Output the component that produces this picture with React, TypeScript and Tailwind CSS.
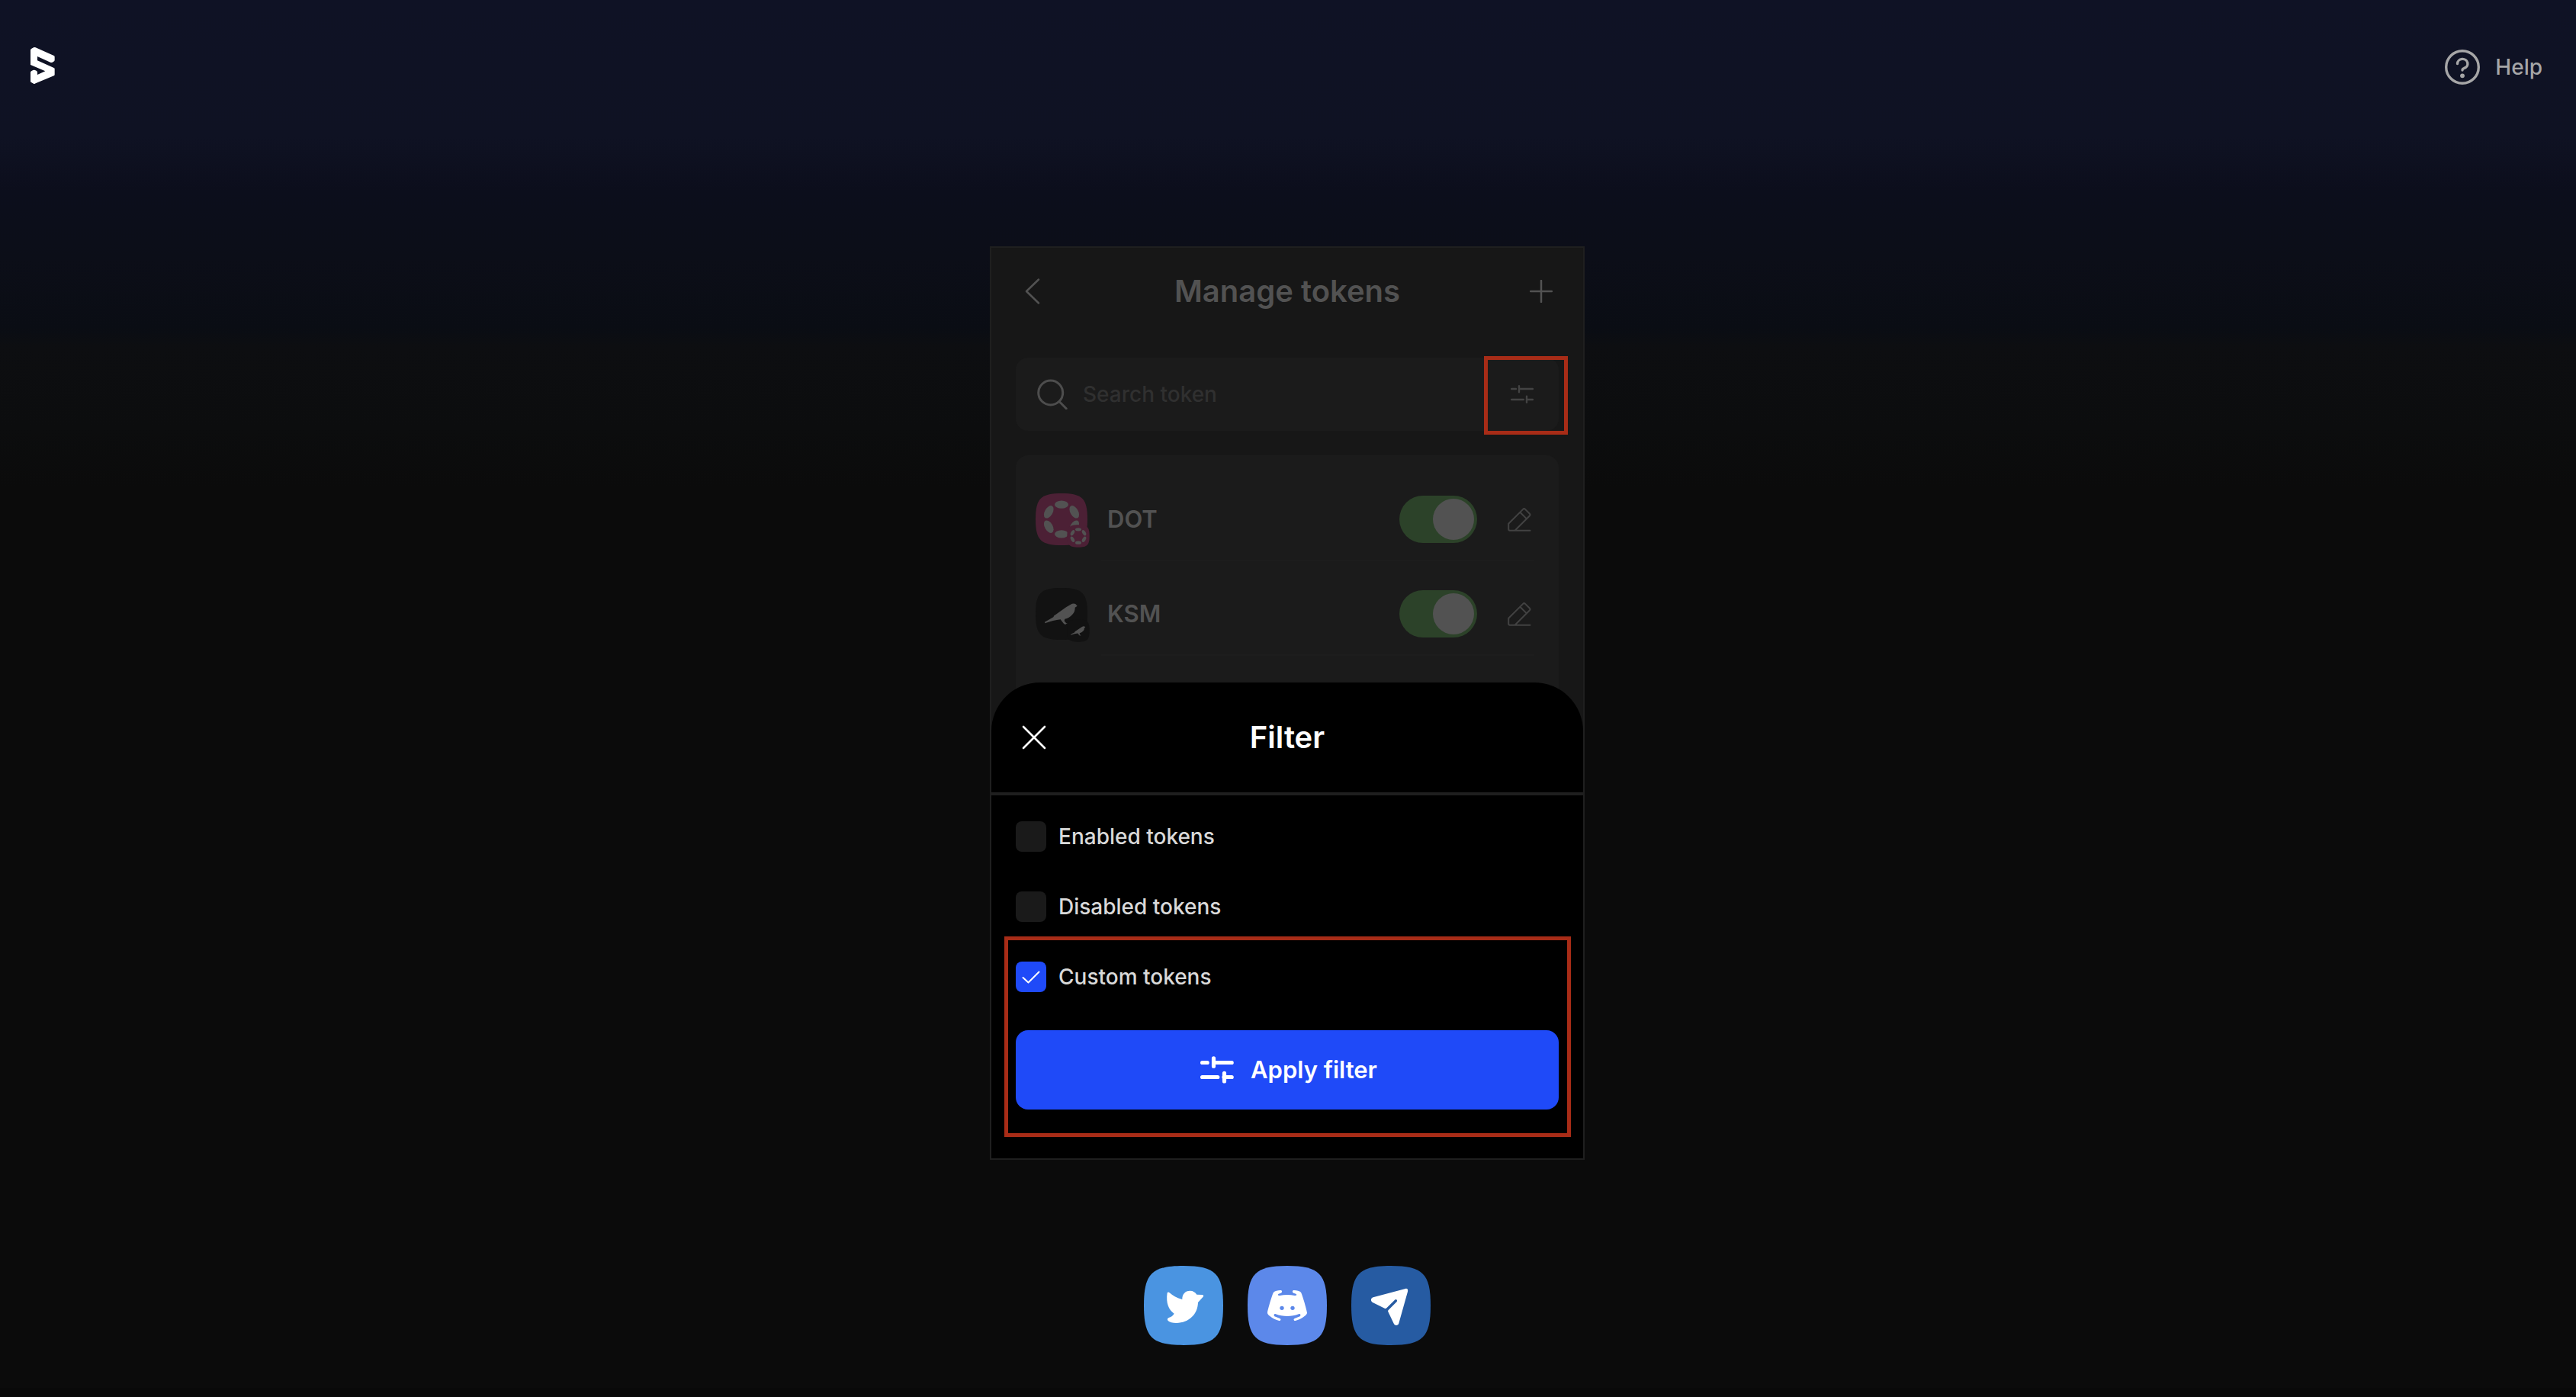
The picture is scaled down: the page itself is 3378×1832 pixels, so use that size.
import { useState } from "react";

const SQUIRCLE = "M50 0C10 0 0 10 0 50S10 100 50 100 100 90 100 50 90 0 50 0Z";

function Logo() {
  return (
    <svg viewBox="0 0 96 144" className="h-12 w-8" fill="#fff" aria-hidden="true">
      <path d="M0 11Q0 8 3 6L12 1Q16 -1 20 1L92 33Q95 34 95 38V50Q95 54 91 56L86 59Q82 61 78 59L27 36V52L92 81Q95 82 95 85V107Q95 110 92 112L20 142Q16 145 12 143L3 138Q0 137 0 134V99Q0 96 3 94L10 90Q14 88 18 90L24 93Q27 95 27 98V108L58 94L0 69Z" />
    </svg>
  );
}

function HelpIcon() {
  return (
    <svg viewBox="0 0 46 46" className="size-[46px]" fill="none" stroke="#a6a6a7" aria-hidden="true">
      <circle cx="23" cy="23" r="21.3" strokeWidth="3.4" />
      <path d="M16.5 18.5a6.7 6.2 0 1 1 8.6 6Q23 25.2 23 27" strokeWidth="3.4" strokeLinecap="round" />
      <circle cx="23" cy="34.3" r="2.9" fill="#a6a6a7" stroke="none" />
    </svg>
  );
}

function SlidersThin() {
  return (
    <svg viewBox="0 0 30 24" className="h-6 w-[30px]" fill="none" stroke="#434343" strokeWidth="2.4" strokeLinecap="round" aria-hidden="true">
      <path d="M1.2 5H7M12 5h17M1.2 19h15.6M22 19h7" />
      <path d="M11 1.2v8M21 14.8v8" />
    </svg>
  );
}

function SlidersBold() {
  return (
    <svg viewBox="0 0 44 36" className="h-9 w-11" fill="none" stroke="#fff" strokeWidth="5.2" strokeLinecap="round" aria-hidden="true">
      <path d="M2.6 8.5h6.6M18 8.5h23.2M2.6 27.5h20.2M31 27.5h10.2" />
      <path d="M17.5 2.8v10.4M31.5 22.4v10.6" />
    </svg>
  );
}

function Pencil() {
  return (
    <svg viewBox="0 0 31 31" className="size-[31px]" fill="none" stroke="#424242" strokeWidth="2" strokeLinecap="round" strokeLinejoin="round" aria-hidden="true">
      <path d="M29.5 29.7H3Q1.2 29.7 1.2 28V20.8L20.4 1.6Q21.6 .6 22.8 1.6L29 7.8Q30 9 29 10.2L10 29.2M16.3 5.8l8.6 8.6" />
    </svg>
  );
}

const PETALS = [0, 60, 120, 180, 240, 300];

function DotIcon() {
  return (
    <svg viewBox="0 0 216 216" className="size-[72px]" aria-hidden="true">
      <path d={SQUIRCLE} transform="scale(2.04)" fill="#4c2035" />
      <g transform="translate(102 102)" fill="#525252">
        {PETALS.map((a) => (
          <ellipse key={a} cx="0" cy="-58" rx="27" ry="15.5" transform={`rotate(${a})`} />
        ))}
      </g>
      <path d={SQUIRCLE} transform="translate(124 124) scale(.88)" fill="#4c2035" />
      <g transform="translate(168 168)" fill="#525252">
        {PETALS.map((a) => (
          <ellipse key={a} cx="0" cy="-26" rx="12" ry="6.5" transform={`rotate(${a})`} />
        ))}
      </g>
    </svg>
  );
}

const BIRD =
  "M36 134L70 115Q71 108 80 104L120 76L138 65Q148 59 157 63L164 71L155 77Q156 92 145 104Q132 119 115 122L113 130Q118 138 126 141L118 141L121 145L112 142L104 132L98 124Q70 127 37 139Z";

function KsmIcon() {
  return (
    <svg viewBox="0 0 216 216" className="size-[72px]" aria-hidden="true">
      <path d={SQUIRCLE} transform="scale(2.04)" fill="#121212" />
      <path d={BIRD} fill="#525252" />
      <path d={SQUIRCLE} transform="translate(124 124) scale(.88)" fill="#121212" />
      <path d={BIRD} transform="translate(122 123) scale(.45)" fill="#525252" />
    </svg>
  );
}

function TokenRow({ symbol, icon }: { symbol: string; icon: React.ReactNode }) {
  const [on, setOn] = useState(true);
  return (
    <li className="mb-4">
      <div className="flex h-[106px] items-center pr-9 pl-[26px]">
        <div className="mt-1 mr-[22px] shrink-0">{icon}</div>
        <span className="flex-1 text-[31px] font-semibold text-[#525252]">{symbol}</span>
        <button
          type="button"
          role="switch"
          aria-checked={on}
          aria-label={`Show ${symbol}`}
          onClick={() => setOn(!on)}
          className={`flex h-[62px] w-[102px] rounded-full p-1 ${on ? "justify-end bg-[#2c4229]" : "justify-start bg-[#2a2a2a]"}`}
        >
          <span className="size-[54px] rounded-full bg-[#525252]" />
        </button>
        <button type="button" aria-label={`Edit ${symbol}`} className="ml-10">
          <Pencil />
        </button>
      </div>
      <div className="mr-8 ml-28 h-0.5 bg-[#1d1d1d]" />
    </li>
  );
}

function FilterOption({ label, initial = false }: { label: string; initial?: boolean }) {
  const [checked, setChecked] = useState(initial);
  return (
    <label className="flex h-10 items-center gap-4 text-[28px] font-medium text-[#d9d9d9]">
      <span className="grid size-10 shrink-0">
        <input
          type="checkbox"
          checked={checked}
          onChange={(e) => setChecked(e.target.checked)}
          className="col-start-1 row-start-1 size-10 appearance-none rounded-lg bg-[#1a1a1a] checked:bg-[#1f4af8]"
        />
        {checked && (
          <svg viewBox="0 0 40 40" className="pointer-events-none col-start-1 row-start-1 size-10" fill="none" stroke="#fff" strokeWidth="2" strokeLinecap="round" strokeLinejoin="round" aria-hidden="true">
            <path d="M9.5 21l7 6.5L30.5 13.5" />
          </svg>
        )}
      </span>
      {label}
    </label>
  );
}

function Social({ label, fill, children }: { label: string; fill: string; children: React.ReactNode }) {
  return (
    <a href="#" aria-label={label}>
      <svg viewBox="0 0 312 312" className="size-[104px]" aria-hidden="true">
        <path d={SQUIRCLE} transform="scale(3.12)" fill={fill} />
        {children}
      </svg>
    </a>
  );
}

const DISCORD_HALF =
  "M157 114C146 114 136 115 127 117C119 118 117 112 122 110L131 107C138 104 136 95 129 96C118 97 108 99 102 104C97 112 80 170 78 184C78 190 82 194 88 198C98 207 112 213 124 216C130 217 133 210 127 207L106 199C101 194 105 187 111 190C125 196 140 198 157 198Z";

export default function App() {
  return (
    <div className="flex min-h-screen flex-col bg-[#0b0b0b] bg-[linear-gradient(to_bottom,#0f1225_0px,#0f1223_180px,#0c0e1c_250px,#0c0e18_340px,#0a0d14_430px,#0d0e11_455px,#0c0d0e_560px,#0b0b0b_640px)] font-[Inter,sans-serif]">
      <header className="flex items-center justify-between py-[62px] pr-11 pl-10">
        <a href="#" aria-label="Home">
          <Logo />
        </a>
        <a href="#" className="-my-4 flex items-center gap-5 pt-1 text-[28px] font-medium text-[#a6a6a7]">
          <HelpIcon />
          Help
        </a>
      </header>

      <main className="mt-[151px] flex flex-col items-center pr-0.5">
        <section className="relative flex min-h-[1198px] w-full max-w-[780px] flex-col overflow-hidden border-2 border-[#1f1f1f] bg-[#171717] px-8">
          <div className="grid h-[114px] grid-cols-[1fr_auto_1fr] items-center px-2">
            <button type="button" aria-label="Back" className="justify-self-start pl-1">
              <svg viewBox="0 0 20 34" className="h-[34px] w-5" fill="none" stroke="#525252" strokeWidth="2.5" strokeLinecap="round" strokeLinejoin="round" aria-hidden="true">
                <path d="M18 1.5L2 17l16 15.5" />
              </svg>
            </button>
            <h1 className="text-[40px] font-semibold text-[#525252]">Manage tokens</h1>
            <button type="button" aria-label="Add token" className="justify-self-end">
              <svg viewBox="0 0 30 30" className="size-[30px]" fill="none" stroke="#525252" strokeWidth="2.5" strokeLinecap="round" aria-hidden="true">
                <path d="M15 1v28M1 15h28" />
              </svg>
            </button>
          </div>

          <div className="mt-[30px] flex h-24 items-center rounded-2xl bg-[#1b1b1b] pl-7">
            <svg viewBox="0 0 40 40" className="size-10 shrink-0" fill="none" stroke="#4d4d4d" strokeWidth="3" strokeLinecap="round" aria-hidden="true">
              <circle cx="17.7" cy="18" r="16" />
              <path d="M29 29.5l9.2 9.2" />
            </svg>
            <input
              type="text"
              aria-label="Search token"
              placeholder="Search token"
              className="ml-5 min-w-0 flex-1 bg-transparent text-[28px] font-medium text-[#525252] outline-none placeholder:text-[#303030]"
            />
            <button type="button" aria-label="Filter tokens" className="relative flex size-24 items-center justify-center">
              <SlidersThin />
              <span className="absolute -top-0.5 -right-3 -bottom-[5px] -left-0.5 border-5 border-[#a82c17]" />
            </button>
          </div>

          <ul className="mt-8 flex-1 rounded-t-2xl bg-[#1b1b1b] pt-[31px]">
            <TokenRow symbol="DOT" icon={<DotIcon />} />
            <TokenRow symbol="KSM" icon={<KsmIcon />} />
          </ul>

          <div role="dialog" aria-label="Filter" className="absolute inset-x-0 bottom-0 rounded-t-[64px] bg-black">
            <div className="grid h-[148px] grid-cols-[1fr_auto_1fr] items-center border-b-4 border-[#1f1f1f] px-10">
              <button type="button" aria-label="Close" className="justify-self-start">
                <svg viewBox="0 0 32 32" className="size-8" fill="none" stroke="#fff" strokeWidth="2.6" strokeLinecap="round" aria-hidden="true">
                  <path d="M2 2l28 28M30 2L2 30" />
                </svg>
              </button>
              <h2 className="text-[40px] font-semibold text-white">Filter</h2>
            </div>
            <div className="flex flex-col gap-[52px] px-8 pt-[34px] pb-16">
              <FilterOption label="Enabled tokens" />
              <FilterOption label="Disabled tokens" />
              <div className="relative flex flex-col gap-[50px]">
                <FilterOption label="Custom tokens" initial />
                <button type="button" className="flex h-[104px] items-center justify-center gap-[22px] rounded-2xl bg-[#1f4af8] pl-1 text-[31px] font-semibold text-white">
                  <SlidersBold />
                  Apply filter
                </button>
                <span className="pointer-events-none absolute -top-[33px] -right-4 -bottom-9 -left-[15px] border-5 border-[#a82c17]" />
              </div>
            </div>
          </div>
        </section>

        <nav aria-label="Social" className="mt-[139px] flex gap-8">
          <Social label="Twitter" fill="#4a94e1">
            <path
              fill="#fff"
              d="M92 106C95 103 98 103 101 106C114 118 131 128 151 132C150 112 163 98 181 98C194 98 203 104 208 113L230 114C236 115 236 119 232 123L213 144C212 190 178 224 128 225C113 225 101 222 95 216C91 211 92 207 98 204C106 201 114 197 119 188C98 173 86 148 92 106Z"
            />
          </Social>
          <Social label="Discord" fill="#5c88ea">
            <path d={DISCORD_HALF} fill="#fff" />
            <path d={DISCORD_HALF} transform="translate(312 0) scale(-1 1)" fill="#fff" />
            <circle cx="135" cy="166" r="8" fill="#5c88ea" />
            <circle cx="177" cy="166" r="8" fill="#5c88ea" />
          </Social>
          <Social label="Telegram" fill="#265ba2">
            <path
              fill="#fff"
              d="M213 90C220 88 224 93 222 101L187 226C185 235 173 237 168 229L145 181Q143 177 146 174L179 141C183 135 176 129 171 134L139 166Q136 169 131 167L84 144C75 139 76 127 86 124Z"
            />
          </Social>
        </nav>
      </main>

      <footer className="mt-auto h-3 bg-[#090909]" />
    </div>
  );
}
